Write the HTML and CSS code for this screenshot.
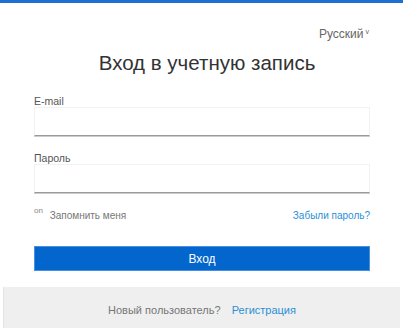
FILE: index.html
```html
<!DOCTYPE html>
<html>
<head>
	<meta charset="utf-8">
	<meta name="viewport" content="width=device-width, initial-scale=1">
	<title>Вход в учетную запись</title>
	<link rel="stylesheet" href="styles.css">
</head>
<body>
	<div class="topbar"></div>

	<div class="container">
		<div class="lang">Русский<span class="caret">v</span></div>
		<h1 class="title">Вход в учетную запись</h1>

		<form class="login-form">
			<div class="field">
				<label for="email">E-mail</label>
				<input type="text" id="email" name="email">
			</div>
			<div class="field">
				<label for="password">Пароль</label>
				<input type="password" id="password" name="password">
			</div>

			<div class="options">
				<div class="remember">
					<span class="on">on</span>
					<span>Запомнить меня</span>
				</div>
				<a href="#" class="forgot">Забыли пароль?</a>
			</div>

			<input type="button" value="Вход" class="login-btn">
		</form>
	</div>

	<div class="footer">
		<span>Новый пользователь?</span>
		<a href="#">Регистрация</a>
	</div>
</body>
</html>
```

FILE: styles.css
```css
*{
    margin:0;
    padding:0;
    box-sizing: border-box;
}
body{
    width: 403px;
    height: 328px;
    background: #fff;
    font-family: "Liberation Sans", Arial, sans-serif;
    color: #333;
    overflow: hidden;
}
.topbar{
    height: 3px;
    background: #1f6fd1;
}
.container{
    padding: 0 33px 0 34px;
}
.lang{
    text-align: right;
    font-size: 12px;
    color: #666;
    margin-top: 24px;
    height: 16px;
    padding-right: 1px;
}
.lang .caret{
    font-size: 7px;
    vertical-align: 4px;
    margin-left: 2px;
}
.title{
    text-align: center;
    font-size: 20.5px;
    font-weight: normal;
    color: #333;
    margin-top: 8px;
    line-height: 24px;
    padding-left: 10px;
}
.login-form{
    margin-top: 20px;
}
.field{
    margin-bottom: 16px;
}
.field label{
    display: block;
    font-size: 10.5px;
    color: #555;
    line-height: 12px;
}
.field input{
    display: block;
    width: 100%;
    height: 29px;
    border: 1px solid #f2f2f2;
    border-bottom: 1px solid #999;
    box-shadow: 0 1px 0 #ccc;
    outline: none;
    background: #fff;
}
.options{
    display: flex;
    justify-content: space-between;
    align-items: flex-end;
    font-size: 10px;
    margin-top: -3px;
}
.remember{
    color: #777;
}
.remember .on{
    font-size: 8px;
    vertical-align: 6px;
    margin-right: 4px;
    color: #888;
}
.forgot{
    color: #2a8fd6;
    text-decoration: none;
}
.login-btn{
    display: block;
    width: 100%;
    height: 25px;
    margin-top: 25px;
    border: 1px solid #4a90e2;
    background: #0266cc;
    color: #fff;
    font-size: 12px;
    font-family: "Liberation Sans", Arial, sans-serif;
}
.footer{
    margin: 16px 3px 0 3px;
    height: 42px;
    background: #efefef;
    border-left: 1px solid #e4e4e4;
    text-align: center;
    font-size: 11px;
    color: #777;
    padding-top: 17px;
}
.footer a{
    color: #2a8fd6;
    text-decoration: none;
    margin-left: 8px;
}
```
